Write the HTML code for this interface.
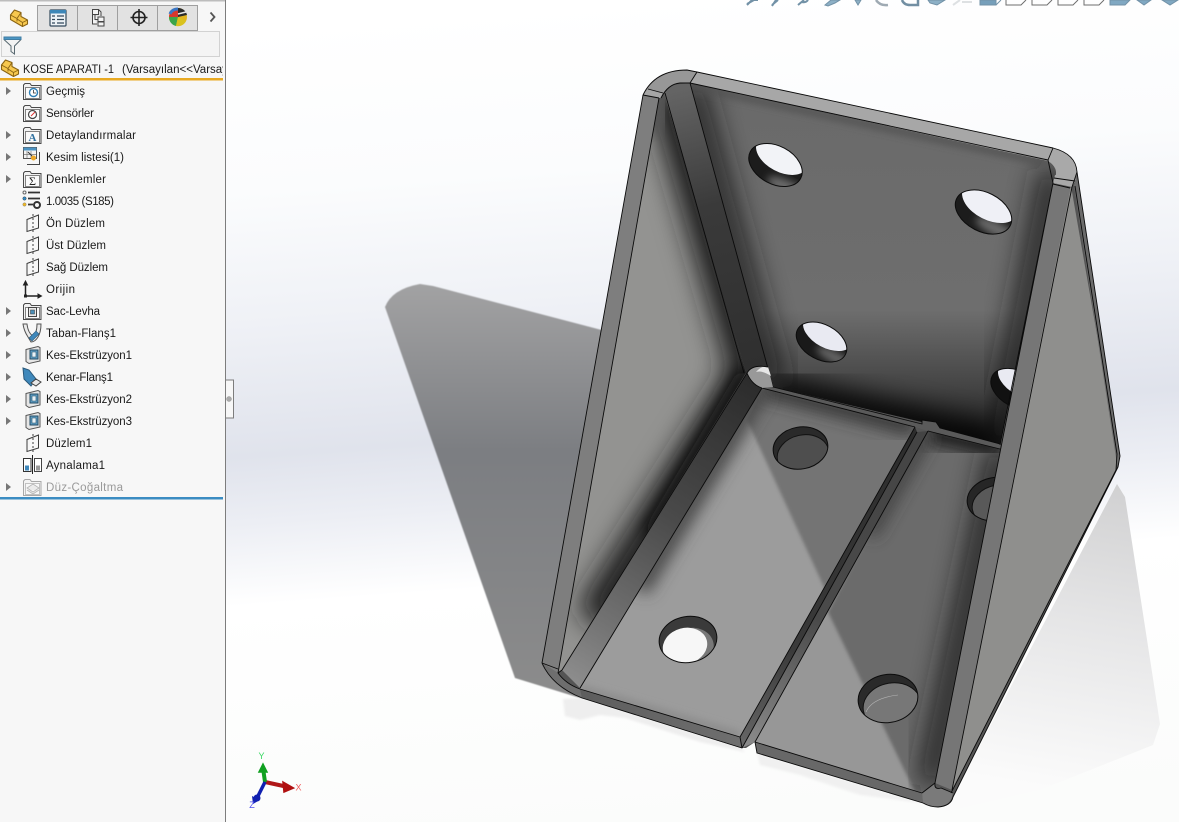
<!DOCTYPE html>
<html><head><meta charset="utf-8"><style>
html,body{margin:0;padding:0;width:1179px;height:822px;overflow:hidden;background:#fff}
#v{position:absolute;left:0;top:0}
#side{position:absolute;left:0;top:0;width:225px;height:822px;background:#f7f7f7;border-right:1px solid #7d7d7d;overflow:hidden}
#ic{position:absolute;left:0;top:0}
#ic .t{font:11.5px "Liberation Sans",sans-serif;fill:#1a1a1a}
</style></head><body>
<svg id="v" width="1179" height="822" viewBox="0 0 1179 822">
<defs>
<linearGradient id="bg" x1="620" y1="0" x2="680" y2="822" gradientUnits="userSpaceOnUse">
<stop offset="0" stop-color="#fff"/><stop offset=".2" stop-color="#fbfcfd"/><stop offset=".36" stop-color="#eff1f6"/><stop offset=".52" stop-color="#e0e3ec"/><stop offset=".6" stop-color="#eceef4"/><stop offset=".7" stop-color="#fff"/><stop offset="1" stop-color="#fbfcfb"/>
</linearGradient>
<linearGradient id="sh" x1="0" y1="285" x2="0" y2="700" gradientUnits="userSpaceOnUse"><stop offset="0" stop-color="#a2a2a3"/><stop offset=".4" stop-color="#7c7e82"/><stop offset="1" stop-color="#8c8c8c"/></linearGradient>
<linearGradient id="sh2" x1="1110" y1="480" x2="1060" y2="790" gradientUnits="userSpaceOnUse"><stop offset="0" stop-color="#d0d0d1"/><stop offset=".45" stop-color="#e5e5e6"/><stop offset="1" stop-color="#fbfbfb"/></linearGradient>
<linearGradient id="back" x1="0" y1="100" x2="0" y2="450" gradientUnits="userSpaceOnUse"><stop offset="0" stop-color="#6a6a6a"/><stop offset=".6" stop-color="#6e6e6e"/><stop offset=".82" stop-color="#444"/><stop offset="1" stop-color="#161616"/></linearGradient>
<linearGradient id="bendB" x1="750" y1="380" x2="565" y2="680" gradientUnits="userSpaceOnUse"><stop offset="0" stop-color="#2c2c2c"/><stop offset=".45" stop-color="#4a4a4a"/><stop offset=".8" stop-color="#727272"/><stop offset="1" stop-color="#8e8e8e"/></linearGradient>
<linearGradient id="bendA" x1="680" y1="90" x2="755" y2="380" gradientUnits="userSpaceOnUse"><stop offset="0" stop-color="#646464"/><stop offset=".4" stop-color="#3a3a3a"/><stop offset="1" stop-color="#2e2e2e"/></linearGradient>
<linearGradient id="edge" x1="580" y1="690" x2="740" y2="745" gradientUnits="userSpaceOnUse"><stop offset="0" stop-color="#5d5d5d"/><stop offset="1" stop-color="#6f6f6f"/></linearGradient>
<linearGradient id="s1" x1="915" y1="430" x2="741" y2="745" gradientUnits="userSpaceOnUse"><stop offset="0" stop-color="#2c2c2c"/><stop offset=".7" stop-color="#3a3a3a"/><stop offset="1" stop-color="#666"/></linearGradient>
<linearGradient id="s2" x1="920" y1="430" x2="748" y2="745" gradientUnits="userSpaceOnUse"><stop offset="0" stop-color="#444"/><stop offset=".6" stop-color="#4a4a4a"/><stop offset="1" stop-color="#8a8a8a"/></linearGradient>
<filter id="b4" x="-30%" y="-30%" width="160%" height="160%"><feGaussianBlur stdDeviation="4"/></filter>
<filter id="b8" x="-30%" y="-30%" width="160%" height="160%"><feGaussianBlur stdDeviation="8"/></filter>
<filter id="b14" x="-30%" y="-30%" width="160%" height="160%"><feGaussianBlur stdDeviation="14"/></filter>
<clipPath id="cL"><polygon points="659,98 665,93 746,373 562,670 558,673"/></clipPath>
<clipPath id="cBack"><polygon points="690,83 1048,160 1057,172 1053,183 1000,445 938,428 922,422 773,387"/></clipPath>
<clipPath id="cF1"><polygon points="580,689 740,737 915,427 762,388"/></clipPath>
<clipPath id="cF2"><polygon points="755,742 922,793 935,783 1001,448 928,431"/></clipPath>
<clipPath id="h1"><ellipse cx="775.500" cy="165" rx="28.500" ry="19" transform="rotate(28 775.500 165)"/></clipPath>
<clipPath id="h2"><ellipse cx="983.500" cy="212" rx="30" ry="19.500" transform="rotate(27 983.500 212)"/></clipPath>
<clipPath id="h3"><ellipse cx="821.500" cy="342" rx="27" ry="17.500" transform="rotate(28 821.500 342)"/></clipPath>
<clipPath id="h4"><ellipse cx="1017" cy="389" rx="28" ry="18" transform="rotate(28 1017 389)"/></clipPath>
<clipPath id="h5"><ellipse cx="800.500" cy="448" rx="27.500" ry="21" transform="rotate(-10 800.500 448)"/></clipPath>
<clipPath id="h6"><ellipse cx="688" cy="639.500" rx="29" ry="23" transform="rotate(-10 688 639.500)"/></clipPath>
<clipPath id="h7"><ellipse cx="888" cy="698.500" rx="30" ry="24" transform="rotate(-10 888 698.500)"/></clipPath>
<clipPath id="h8"><ellipse cx="995" cy="499" rx="28" ry="21.500" transform="rotate(-10 995 499)"/></clipPath>
</defs>
<rect width="1179" height="822" fill="url(#bg)"/>

<!-- shadows -->
<path d="M385 307 Q392 289 420 284 L433 286 L640 340 L600 700 L580 698 L515 678 Z" fill="url(#sh)" style="filter:blur(.6px)"/>
<polygon points="563,699 582,698 738,746 745,752 700,742 625,718 600,715 580,720 565,716" fill="#eeeeee" style="filter:blur(1px)"/>
<polygon points="757,753 922,803 860,795 800,775 760,765" fill="#f0f0f0" style="filter:blur(1px)"/>
<polygon points="1117,484 1125,497 1160,724 1153,745 1040,790 945,812 953,797" fill="url(#sh2)"/>

<!-- silhouette underlay -->
<path d="M643 95 Q655 70 687 70 L697 72 L1053 148 Q1076 154 1077 172 L1120 456 L1118 467 L953 797 Q951 806 938 807 Q930 807 923 803 L757 753 L755 742 L746 748 L741 748 L582 698 Q552 686 542 663 Z" fill="#555"/>

<!-- left interior -->
<polygon points="659,98 665,93 746,373 562,670 558,673" fill="#939391"/>
<g clip-path="url(#cL)">
<polyline points="670,90 752,373 595,622" fill="none" stroke="#1c1c1c" stroke-width="44" filter="url(#b14)"/>
<polyline points="652,90 662,130" fill="none" stroke="#555" stroke-width="25" filter="url(#b8)"/>
<polyline points="746,373 650,535" fill="none" stroke="#111" stroke-width="16" filter="url(#b8)"/>
</g>

<!-- back panel -->
<polygon points="690,83 1048,160 1057,172 1053,183 1000,445 938,428 922,422 773,387" fill="url(#back)"/>
<g clip-path="url(#cBack)">
<polyline points="690,83 773,387" fill="none" stroke="#1e1e1e" stroke-width="24" filter="url(#b14)"/>
<polyline points="1053,170 1000,445" fill="none" stroke="#1a1a1a" stroke-width="24" filter="url(#b14)"/>
<polyline points="690,86 1048,163" fill="none" stroke="#505050" stroke-width="6" filter="url(#b4)"/>
<polyline points="773,390 1000,445" fill="none" stroke="#000" stroke-width="30" filter="url(#b14)"/>
</g>
<polygon points="664,93 672,85 690,83 774,388 762,389 746,373" fill="url(#bendA)"/>

<!-- holes in back -->
<g clip-path="url(#h1)"><rect x="740" y="135" width="75" height="60" fill="#1c1c1c"/><ellipse cx="790" cy="190" rx="25" ry="8" fill="#6a6a6a" filter="url(#b4)" transform="rotate(28 790 190)"/><ellipse cx="782" cy="155" rx="28" ry="17" transform="rotate(28 782 155)" fill="#f2f3f7"/></g>
<g clip-path="url(#h2)"><rect x="950" y="185" width="70" height="60" fill="#1c1c1c"/><ellipse cx="998" cy="230" rx="25" ry="7" fill="#6a6a6a" filter="url(#b4)" transform="rotate(27 998 230)"/><ellipse cx="990" cy="202" rx="30" ry="18" transform="rotate(27 990 202)" fill="#eff0f6"/></g>
<g clip-path="url(#h3)"><rect x="790" y="320" width="65" height="50" fill="#191919"/><ellipse cx="836" cy="358" rx="22" ry="6" fill="#666" filter="url(#b4)" transform="rotate(28 836 358)"/><ellipse cx="828" cy="332" rx="27" ry="16" transform="rotate(28 828 332)" fill="#e9eaf2"/></g>
<g clip-path="url(#h4)"><rect x="985" y="365" width="60" height="50" fill="#111"/><ellipse cx="1023" cy="380" rx="27" ry="16" transform="rotate(28 1023 380)" fill="#e9eaf2"/></g>
<g fill="none" stroke="#0c0c0c" stroke-width="1">
<ellipse cx="775.500" cy="165" rx="28.500" ry="19" transform="rotate(28 775.500 165)"/>
<ellipse cx="983.500" cy="212" rx="30" ry="19.500" transform="rotate(27 983.500 212)"/>
<ellipse cx="821.500" cy="342" rx="27" ry="17.500" transform="rotate(28 821.500 342)"/>
<ellipse cx="1017" cy="389" rx="28" ry="18" transform="rotate(28 1017 389)"/>
</g>

<!-- floor 1 -->
<polygon points="580,689 740,737 915,427 762,388" fill="#9c9c9c"/>
<g clip-path="url(#cF1)">
<polygon points="747,420 830,600 920,620 930,400 762,385" fill="#747474" style="filter:blur(1.500px)"/>
<polyline points="760,388 915,428" fill="none" stroke="#333" stroke-width="16" filter="url(#b8)"/>
<polyline points="762,388 640,590" fill="none" stroke="#444" stroke-width="18" filter="url(#b8)"/>
<polyline points="580,689 740,736" fill="none" stroke="#8a8a8a" stroke-width="8" filter="url(#b4)"/>
</g>
<!-- floor 2 -->
<polygon points="755,742 922,793 935,783 1001,448 928,431" fill="#979797"/>
<g clip-path="url(#cF2)">
<polygon points="828,612 915,792 960,800 1010,440 925,425" fill="#6b6b6b" style="filter:blur(1.500px)"/>
<polyline points="1001,448 930,785" fill="none" stroke="#1c1c1c" stroke-width="24" filter="url(#b14)"/>
<polyline points="928,432 1001,448" fill="none" stroke="#222" stroke-width="24" filter="url(#b8)"/>
<polyline points="928,432 870,535" fill="none" stroke="#3a3a3a" stroke-width="12" filter="url(#b8)"/>
</g>

<!-- floor holes -->
<g clip-path="url(#h5)"><rect x="770" y="420" width="62" height="55" fill="#2a2a2a"/><ellipse cx="803" cy="455" rx="26" ry="20" transform="rotate(-12 803 455)" fill="#4e4e4e" stroke="#111"/></g>
<g clip-path="url(#h6)"><rect x="655" y="612" width="66" height="55" fill="#3a3a3a"/><ellipse cx="690" cy="648" rx="24" ry="20" fill="#787878" transform="rotate(-15 690 648)"/><ellipse cx="685" cy="646" rx="22.500" ry="18" fill="#f7f7f7" transform="rotate(-15 685 646)"/></g>
<g clip-path="url(#h7)"><rect x="855" y="670" width="66" height="58" fill="#2a2a2a"/><ellipse cx="892" cy="706" rx="29" ry="23" transform="rotate(-10 892 706)" fill="#777" stroke="#111"/><path d="M866 712 Q872 698 898 695" fill="none" stroke="#b5b5b5" stroke-width=".6"/></g>
<g clip-path="url(#h8)"><rect x="960" y="470" width="62" height="55" fill="#262626"/><ellipse cx="999" cy="505" rx="27" ry="20" transform="rotate(-10 999 505)" fill="#595959" stroke="#111"/></g>
<g fill="none" stroke="#0c0c0c" stroke-width="1">
<ellipse cx="800.500" cy="448" rx="27.500" ry="21" transform="rotate(-10 800.500 448)"/>
<ellipse cx="688" cy="639.500" rx="29" ry="23" transform="rotate(-10 688 639.500)"/>
<ellipse cx="888" cy="698.500" rx="30" ry="24" transform="rotate(-10 888 698.500)"/>
<ellipse cx="995" cy="499" rx="28" ry="21.500" transform="rotate(-10 995 499)"/>
</g>

<!-- lower bend, slit -->
<polygon points="562,670 580,688 762,388 747,373" fill="url(#bendB)"/>
<polygon points="915,427 917,432 742,748 740,737" fill="url(#s1)"/>
<polygon points="917,432 928,431 755,742 742,748" fill="url(#s2)"/>
<polygon points="773,387 922,424 922,420 936,422 940,428 1000,444 1000,449 928,431 915,427 762,388" fill="#5a5a5a"/>

<!-- front edges -->
<polygon points="580,689 740,737 742,748 582,698" fill="url(#edge)"/>
<polygon points="755,742 922,793 923,803 757,753" fill="#686868"/>
<path d="M542 663 L558 673 Q566 684 580 689 L582 698 Q556 690 542 665 Z" fill="#6e6e6e"/>
<path d="M922 793 L935 783 Q934 790 941 788 L953 793 Q951 806 938 807 Q930 807 923 803 Z" fill="#7a7a7a"/>

<!-- left flange -->
<polygon points="643,95 659,98 558,673 542,663" fill="#7e7e7e"/>
<!-- top rim -->
<polygon points="697,72 1053,148 1048,161 690,83" fill="#a7a7a7"/>
<path d="M643 95 Q655 70 687 70 L697 72 L690 83 L680 83 Q668 84 661 98 Z" fill="#979797"/>
<polygon points="648,89 663,93 660,98 643,95" fill="#a5a5a5"/>
<path d="M1053 148 Q1076 154 1077 172 L1075 180 L1055 178 Q1059 168 1048 161 Z" fill="#a9a9a9"/>
<polygon points="1055,175 1076,179 1072,187 1053,183" fill="#a9a9a9"/>
<!-- right flange -->
<polygon points="1053,183 1071,188 952,790 935,783" fill="#767676"/>
<polygon points="1071,186 1118,455 1116,470 952,790" fill="#8f8f8d"/>
<polygon points="1077,172 1120,456 1118,467 1116,458 1074,186" fill="#6b6b6b"/>

<!-- lines -->
<g fill="none" stroke="#0a0a0a" stroke-width=".9" stroke-linejoin="round">
<path d="M643 95 L542 663 Q552 686 582 698 L742 748 L740 737 L580 689 Q566 684 558 673 L659 98"/>
<path d="M643 95 Q655 70 687 70 L697 72 L1053 148 Q1076 154 1077 172 L1120 456 L1118 467 L953 797 Q951 806 938 807 Q930 807 923 803 L757 753 L755 742 L922 793"/>
<path d="M648 89 L663 93 M643 95 L659 98 M697 72 L690 83 L1048 160 L1053 148 M661 98 Q668 84 680 83 L690 83"/>
<path d="M665 93 L744 373 M690 83 L773 387 L922 424 L922 420 L936 422 L940 428 L1000 444"/>
<path d="M747 373 L562 670 M762 388 L580 688 M762 388 L915 427"/>
<path d="M915 427 L740 737 M917 432 L742 748 M928 431 L755 742 M928 431 L1000 449"/>
<path d="M1048 160 L1053 183 L1000 445 M1054 178 L1075 181 M1053 184 L1070 188 M1077 172 L1072 187 L952 790 M1053 183 L935 783 M1075 186 L1117 454 L1116 470 L951 793 M922 793 L935 783 M935 783 Q934 790 941 788 L953 793"/>
<path d="M558 673 L562 670 M542 663 L558 669"/>
</g>
<path d="M747 373 Q752 364 768 367 L773 387 L762 388 Q752 385 747 373Z" fill="#999"/>
<path d="M756 372 Q762 365 768 367 L771 376 Q762 370 756 372Z" fill="#e6e6e6"/>
<path d="M747 373 Q752 364 768 367 M747 373 Q752 385 762 388" fill="none" stroke="#0a0a0a" stroke-width=".9"/>

<!-- toolbar -->
<g stroke="#5a7f98" stroke-width="1" fill="#7aa3bd" opacity=".85">
<path d="M747 4 L754 0 L758 0 M752 0 L747 5" fill="none" stroke-width="2"/>
<path d="M772 5 L778 0 M776 0 L772 6" fill="none" stroke-width="2"/>
<path d="M798 5 L804 0 M808 0 Q806 3 802 2" fill="none" stroke-width="2"/>
<path d="M825 5 L831 0 H840 L835 3 L828 6Z"/>
<path d="M855 0 L858 5 L861 0Z"/>
<path d="M876 0 Q880 6 888 5" fill="none" stroke="#8f9ca6" stroke-width="2.500"/>
<path d="M902 0 Q904 5 910 5 H918 V0" fill="none" stroke="#5a7c93" stroke-width="2.500"/>
<path d="M928 0 H945 L937 5 L930 3Z"/>
<path d="M953 5 L960 0 M962 2 H972" fill="none" stroke="#d9dcdf" stroke-width="2"/>
<path d="M980 0 H996 V5 H980Z" fill="#5f8fae"/><path d="M996 5 L1001 0" fill="none"/>
<path d="M1006 0 V5 H1021 L1026 0" fill="#fff" stroke="#555"/>
<path d="M1032 0 V5 H1047 L1052 0" fill="#fff" stroke="#555"/>
<path d="M1058 0 V5 H1073 L1078 0" fill="#fff" stroke="#555"/>
<path d="M1084 0 V5 H1099 L1104 0" fill="#fff" stroke="#555"/>
<path d="M1110 0 V5 H1125 L1130 0Z" fill="#6b9ab8"/>
<path d="M1137 0 L1144 5 L1151 0Z" fill="#6b9ab8"/>
<path d="M1162 0 L1170 5 L1178 0Z" fill="#6b9ab8"/>
</g>

<!-- triad -->
<path d="M265 782 L288 787" stroke="#b01818" stroke-width="4" fill="none"/><path d="M283 782 L293.500 788 L284 792Z" fill="#b01010" stroke="#b01010" stroke-width="1.500"/>
<path d="M265 782 L263 768" stroke="#10a020" stroke-width="4" fill="none"/><path d="M259 772 L263 764 L267 772Z" fill="#10a020" stroke="#10a020" stroke-width="1.500"/>
<path d="M265 782 L257 798" stroke="#1020b0" stroke-width="3.500" fill="none"/><circle cx="257" cy="798" r="3.500" fill="#1020b0"/><path d="M252 796 L260 800 L253 804Z" fill="#1020b0"/>
<text x="261.500" y="759" font-family="Liberation Sans" font-size="9" fill="#35d860" text-anchor="middle">Y</text>
<text x="298.500" y="790.500" font-family="Liberation Sans" font-size="9" fill="#f06060" text-anchor="middle">X</text>
<text x="252" y="808" font-family="Liberation Sans" font-size="9" fill="#4f4ff0" text-anchor="middle">Z</text>

<!-- handle -->
<path d="M225 380 H233.500 V418 H225" fill="#f7f7f7" stroke="#7d7d7d"/>
<circle cx="229" cy="399" r="2.500" fill="#aaa" stroke="#999" stroke-width=".5"/>
</svg>

<div id="side">
<svg id="ic" width="225" height="822" viewBox="0 0 225 822">
<defs>
<clipPath id="tc"><rect x="0" y="55" width="223" height="24"/></clipPath>
<symbol id="part" viewBox="0 0 18 18" overflow="visible"><path d="M.5 6 L4.500 1 L11 3.500 V7.500 L17.500 11 V15 L12.500 17.500 L.5 10.500 Z" fill="#f7c84e" stroke="#8a6414" stroke-width="1.100" stroke-linejoin="round"/><path d="M.5 6 L7 9.500 L11 3.500 M7 9.500 V12.500 M7 10 L12.500 13.500 V17.500 M12.500 13.500 L17.500 11" fill="none" stroke="#8a6414" stroke-width=".9"/></symbol>
<symbol id="folder" viewBox="0 0 19 18" overflow="visible"><path d="M.500 16.500 V2 L2 .500 H7 L8.500 2.500 H18 V16.500 Z" fill="#f1f1f1" stroke="#4a4a4a"/><rect x="2.500" y="4.500" width="14" height="11" fill="#fafafa" stroke="#666" stroke-width=".8"/></symbol>
<symbol id="plane" viewBox="0 0 14 18" overflow="visible"><path d="M1 5.500 L12.500 1 V14 L1 17.500 Z" fill="none" stroke="#3c3c3c"/><path d="M7 0 V18" stroke="#3c3c3c" stroke-dasharray="2 2"/></symbol>
<symbol id="cut" viewBox="0 0 16 18" overflow="visible"><path d="M1 3.500 L13 .500 L15 1.500 V15 L4 17.500 L1 15.500 Z" fill="#e6e6e6" stroke="#555"/><rect x="5" y="4" width="8" height="9" fill="#5f9fc4" stroke="#234a63"/><path d="M7 6 H11 V11 H7Z" fill="#e8f2f8" stroke="#234a63" stroke-width=".6"/></symbol>
<symbol id="ex" viewBox="0 0 5 8"><path d="M0 0 L5 4 L0 8Z" fill="#777"/></symbol>
</defs>
<rect x="0" y="0" width="225" height="1.500" fill="#bdbdbd"/>
<!-- tabs -->
<rect x="37.500" y="5.500" width="160" height="25" fill="#e2e2e2" stroke="#9f9f9f"/>
<path d="M77.500 5 V30 M117.500 5 V30 M157.500 5 V30" stroke="#9f9f9f"/>
<use href="#part" x="10" y="9" width="18" height="18"/>
<rect x="50" y="10" width="16" height="16" fill="#eef3f7" stroke="#33495b" stroke-width="1.200" rx="1"/><rect x="50" y="10" width="16" height="3.500" fill="#3d87b8"/><path d="M52 16 H55 M52 19.500 H55 M52 23 H55 M57 16 H64 M57 19.500 H64 M57 23 H64" stroke="#33495b" stroke-width="1.200"/>
<path d="M92.500 9.500 H98.500 V14.500 H92.500Z M92.500 14.500 V24 H97 M95 14.500 V19.500 H98 M98 17 H104 V21.500 H98Z M98 22 H104 V26 H98Z M98.500 9.500 L101 12 V16" fill="#f4f4f4" stroke="#444"/>
<circle cx="139" cy="17.500" r="6" fill="none" stroke="#222" stroke-width="1.600"/><path d="M139 9 V26 M130.500 17.500 H147.500" stroke="#222" stroke-width="1.600"/>
<circle cx="178" cy="17" r="9" fill="#e3b51e"/><path d="M178 17 L169 17 A9 9 0 0 1 178 8Z" fill="#d6372c"/><path d="M178 17 L178 8 A9 9 0 0 1 187 15Z" fill="#2b2b2b"/><path d="M178 17 L169 17 A9 9 0 0 0 176 26Z" fill="#3aa54a"/><path d="M178 17 L176 26 A9 9 0 0 0 186 21Z" fill="#d9c21e"/><path d="M170 14 Q172 9 178 9" fill="none" stroke="#3a76c4" stroke-width="3"/><path d="M178 14 L186 12" stroke="#e8e8e8" stroke-width="1.500"/>
<path d="M210.500 12.500 L214.500 17 L210.500 21.500" fill="none" stroke="#555" stroke-width="1.800"/>
<!-- filter box -->
<rect x="1.500" y="31.500" width="218" height="25" fill="#f4f4f4" stroke="#d2d2d2"/>
<path d="M4 37 H21 V39.500 L14.500 46 V54 L11 51.500 V46 L4 39.500Z" fill="#f3f3f3" stroke="#5a6a72"/><path d="M4 37 H21 V39.500 H4Z" fill="#4c96c4" stroke="#3f7da3"/>
<use href="#part" x="1" y="59" width="18" height="18"/>
<rect x="0" y="78" width="223" height="2.500" fill="#e8a922"/>
<rect x="0" y="497" width="223" height="2.500" fill="#3b8cc2"/>

<!-- expanders -->
<use href="#ex" x="6" y="87" width="5" height="8"/><use href="#ex" x="6" y="131" width="5" height="8"/><use href="#ex" x="6" y="153" width="5" height="8"/><use href="#ex" x="6" y="175" width="5" height="8"/><use href="#ex" x="6" y="307" width="5" height="8"/><use href="#ex" x="6" y="329" width="5" height="8"/><use href="#ex" x="6" y="351" width="5" height="8"/><use href="#ex" x="6" y="373" width="5" height="8"/><use href="#ex" x="6" y="395" width="5" height="8"/><use href="#ex" x="6" y="417" width="5" height="8"/><use href="#ex" x="6" y="483" width="5" height="8"/>

<!-- row icons -->
<use href="#folder" x="23" y="83" width="19" height="18"/><circle cx="33.500" cy="92.500" r="4" fill="#fff" stroke="#2f7fb5" stroke-width="1.400"/><path d="M33.500 90 V93 H36" fill="none" stroke="#333" stroke-width=".8"/>
<use href="#folder" x="23" y="105" width="19" height="18"/><circle cx="32.500" cy="114.500" r="4" fill="#fff" stroke="#444" stroke-width="1.200"/><path d="M31 116 L35 112" stroke="#d33" stroke-width="1"/>
<use href="#folder" x="23" y="127" width="19" height="18"/><text x="32.500" y="141" text-anchor="middle" font-family="Liberation Serif" font-weight="bold" font-size="11" fill="#2d6f9f">A</text>
<rect x="23.500" y="147.500" width="13" height="11" fill="#f3f3f3" stroke="#555"/><rect x="23.500" y="147.500" width="13" height="3" fill="#4c93c2"/><path d="M27 151 V158 M31 151 V158 M24 154.500 H36" stroke="#777" stroke-width=".7"/><path d="M28 152 L33 157" stroke="#333"/><circle cx="33.500" cy="158" r="2.500" fill="#eda727"/><path d="M39.500 152 V164.500 H27" fill="none" stroke="#444"/>
<use href="#folder" x="23" y="171" width="19" height="18"/><text x="32.500" y="185" text-anchor="middle" font-family="Liberation Serif" font-size="12" fill="#222">Σ</text>
<circle cx="24.500" cy="192.500" r="1.500" fill="#fff" stroke="#666"/><circle cx="24.500" cy="198.500" r="1.700" fill="#2f8cc9" stroke="#444" stroke-width=".5"/><circle cx="24.500" cy="204.500" r="1.700" fill="#f1b81e" stroke="#888" stroke-width=".5"/><path d="M28 192.500 H40 M28 198.500 H40 M28 204.500 H33" stroke="#333" stroke-width="1.700"/><circle cx="37" cy="205" r="3" fill="none" stroke="#333" stroke-width="2"/>
<use href="#plane" x="26" y="214" width="14" height="18"/><use href="#plane" x="26" y="236" width="14" height="18"/><use href="#plane" x="26" y="258" width="14" height="18"/><use href="#plane" x="26" y="434" width="14" height="18"/>
<path d="M25.500 284 V296 H39" fill="none" stroke="#222" stroke-width="1.500"/><path d="M23.500 285 L25.500 281 L27.500 285Z M38 294 L41.500 296 L38 298Z" fill="#222" stroke="#222"/><rect x="24" y="294.500" width="3" height="3" fill="#222"/>
<use href="#folder" x="23" y="303" width="19" height="18"/><rect x="28.500" y="307.500" width="8" height="9" fill="#e9e9e9" stroke="#444"/><rect x="30.500" y="310" width="4" height="4" fill="#4a8fb8" stroke="#333" stroke-width=".5"/>
<path d="M23 324 Q24 331 28 337 L31 342 Q35 342 38 337 Q41 332 41 324 L37 324 Q37 333 33 336 Q28 333 27 324Z" fill="#eaeaea" stroke="#555"/><path d="M29 338 L36 331 L39 334 L32 341Z" fill="#3f88bb" stroke="#29587a" stroke-width=".6"/>
<use href="#cut" x="25" y="346" width="16" height="18"/><use href="#cut" x="25" y="390" width="16" height="18"/><use href="#cut" x="25" y="412" width="16" height="18"/>
<path d="M23 368 L29 370 L36 379 L31 386 L24 379Z" fill="#3f88bb" stroke="#29587a"/><path d="M31 383 L36 379 L41 382 L36 386Z" fill="#e8e8e8" stroke="#444"/>
<path d="M23.500 458.500 H31 V471.500 H23.500Z" fill="#fff" stroke="#333"/><rect x="25" y="465.500" width="4" height="5" fill="#3f88bb"/><path d="M32.500 455 V474" stroke="#222"/><path d="M34.500 458.500 H41.500 V471.500 H34.500Z" fill="#fff" stroke="#444"/><rect x="36" y="465.500" width="4" height="5" fill="#999"/>
<g opacity=".45"><use href="#folder" x="23" y="479" width="19" height="18"/><path d="M27 488 L33 484 L39 488 L33 492Z M27 490 L33 494 L39 490" fill="#ddd" stroke="#666" stroke-width=".8"/></g>

<!-- labels -->
<g clip-path="url(#tc)"><text class="t" x="23" y="73" textLength="91" lengthAdjust="spacingAndGlyphs">KOSE APARATI -1</text><text class="t" x="122" y="73" textLength="106" lengthAdjust="spacingAndGlyphs">(Varsayılan&lt;&lt;Varsay</text></g>
<text class="t" x="46" y="95" textLength="39">Geçmiş</text>
<text class="t" x="46" y="117" textLength="48">Sensörler</text>
<text class="t" x="46" y="139" textLength="90">Detaylandırmalar</text>
<text class="t" x="46" y="161" textLength="78">Kesim listesi(1)</text>
<text class="t" x="46" y="183" textLength="60">Denklemler</text>
<text class="t" x="46" y="205" textLength="68">1.0035 (S185)</text>
<text class="t" x="46" y="227" textLength="59">Ön Düzlem</text>
<text class="t" x="46" y="249" textLength="60">Üst Düzlem</text>
<text class="t" x="46" y="271" textLength="62">Sağ Düzlem</text>
<text class="t" x="46" y="293" textLength="29">Orijin</text>
<text class="t" x="46" y="315" textLength="54">Sac-Levha</text>
<text class="t" x="46" y="337" textLength="70">Taban-Flanş1</text>
<text class="t" x="46" y="359" textLength="86">Kes-Ekstrüzyon1</text>
<text class="t" x="46" y="381" textLength="67">Kenar-Flanş1</text>
<text class="t" x="46" y="403" textLength="86">Kes-Ekstrüzyon2</text>
<text class="t" x="46" y="425" textLength="86">Kes-Ekstrüzyon3</text>
<text class="t" x="46" y="447" textLength="46">Düzlem1</text>
<text class="t" x="46" y="469" textLength="59">Aynalama1</text>
<text class="t" x="46" y="491" textLength="77" style="fill:#9a9a9a">Düz-Çoğaltma</text>
</svg>
</div>
</body></html>
